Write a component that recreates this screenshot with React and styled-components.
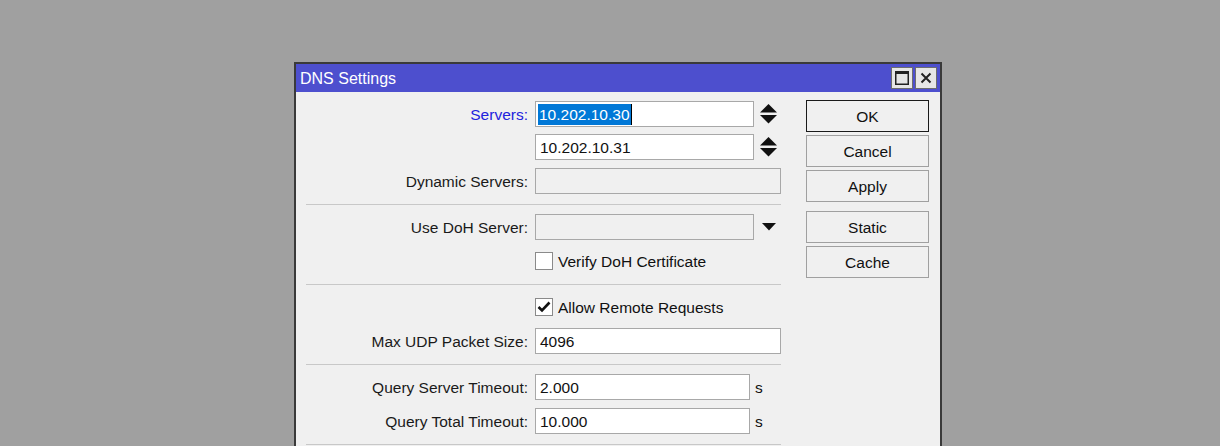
import React from 'react';
import styled, { createGlobalStyle } from 'styled-components';

const GlobalStyle = createGlobalStyle`
  html, body {
    margin: 0;
    padding: 0;
    background: #a0a0a0;
    font-family: "Liberation Sans", Arial, sans-serif;
    overflow: hidden;
  }
`

const Desk = styled.div`
  width: 1220px;
  height: 446px;
  padding: 62px 0 0 294px;
  box-sizing: border-box;
`

const Window = styled.div`
  width: 648px;
  height: 384px;
  box-sizing: border-box;
  border: 2px solid #3a3a3a;
  border-bottom: none;
  background: #f0f0f0;
  overflow: hidden;
`

const TitleBar = styled.div`
  height: 28px;
  background: #4d4fce;
  display: flex;
  align-items: center;
  padding: 0 3px 0 4px;
  color: #fff;
  font-size: 16px;
`

const Title = styled.div`
  flex: 1;
  padding-top: 2px;
`

const TitleButton = styled.div`
  width: 20px;
  height: 20px;
  margin-left: 2px;
  background: #e6e6e6;
  border: 1px solid #6d6d6d;
  display: flex;
  align-items: center;
  justify-content: center;
`

const Body = styled.div`
  display: flex;
  padding: 9px 11px 0 10px;
  gap: 25px;
`

const Form = styled.div`
  width: 475px;
  display: flex;
  flex-direction: column;
`

const Row = styled.div`
  height: 26px;
  flex-shrink: 0;
  display: flex;
  align-items: center;
  margin-top: ${p => p.$top ?? 8}px;
  font-size: 15.5px;
`

const Label = styled.div`
  width: 222px;
  margin-right: 7px;
  padding-top: 2px;
  text-align: right;
  color: ${p => p.$accent ? '#2222dd' : '#1a1a1a'};
  white-space: nowrap;
`

const Field = styled.div`
  width: ${p => p.$w}px;
  height: 26px;
  box-sizing: border-box;
  border: 1px solid #a8a8a8;
  background: ${p => p.$disabled ? '#f0f0f0' : '#fff'};
  color: #111;
  padding: 1px 0 0 4px;
  display: flex;
  align-items: center;
`

const Selected = styled.span`
  background: #0078d7;
  color: #fff;
  line-height: 21px;
  padding: 0 1px 0 1px;
  margin: -1px 0 0 -2px;
  border-right: 1px solid #000;
`

const Side = styled.div`
  width: 17px;
  margin-left: 6px;
  display: flex;
  align-items: center;
  justify-content: center;
`

const Unit = styled.div`
  margin-left: 5px;
  padding-top: 2px;
  color: #111;
`

const Separator = styled.div`
  height: 1px;
  flex-shrink: 0;
  background: #c8c8c8;
  margin: 10px 0 9px;
`

const Check = styled.div`
  width: 18px;
  height: 18px;
  box-sizing: border-box;
  border: 1px solid #8a8a8a;
  background: #fff;
  margin-left: 229px;
  margin-right: 5px;
  display: flex;
  align-items: center;
  justify-content: center;
`

const CheckText = styled.div`
  padding-top: 2px;
  color: #111;
`

const Buttons = styled.div`
  width: 123px;
  display: flex;
  flex-direction: column;
  margin-top: -1px;
`

const Button = styled.div`
  height: 32px;
  flex-shrink: 0;
  box-sizing: border-box;
  border: 1px solid ${p => p.$default ? '#1a1a1a' : '#a0a0a0'};
  background: #f0f0f0;
  display: flex;
  align-items: center;
  justify-content: center;
  padding-top: 2px;
  font-size: 15.5px;
  color: #111;
  margin-top: ${p => p.$top ?? 3}px;
`

const Spinner = () => (
  <svg width="17" height="20" viewBox="0 0 17 20">
    <path d="M8.5 0 L17 8.5 L0 8.5 Z" fill="#111" />
    <path d="M0 11 L17 11 L8.5 19.5 Z" fill="#111" />
  </svg>
)

const DropArrow = () => (
  <svg width="14" height="8" viewBox="0 0 14 8">
    <path d="M0 0 L14 0 L7 7.5 Z" fill="#111" />
  </svg>
)

const Tick = () => (
  <svg width="14" height="12" viewBox="0 0 14 12">
    <path d="M1.5 6 L5 9.5 L12.5 1.5" fill="none" stroke="#111" strokeWidth="2.6" />
  </svg>
)

export default function App() {
  return (
    <>
      <GlobalStyle />
      <Desk>
        <Window>
          <TitleBar>
            <Title>DNS Settings</Title>
            <TitleButton>
              <svg width="14" height="14" viewBox="0 0 14 14">
                <rect x="0.75" y="0.75" width="12.5" height="12.5" fill="none" stroke="#222" strokeWidth="1.5" />
                <rect x="0" y="0" width="14" height="3" fill="#222" />
              </svg>
            </TitleButton>
            <TitleButton>
              <svg width="12" height="12" viewBox="0 0 12 12">
                <path d="M1.5 1.5 L10.5 10.5 M10.5 1.5 L1.5 10.5" stroke="#222" strokeWidth="2" />
              </svg>
            </TitleButton>
          </TitleBar>
          <Body>
            <Form>
              <Row $top={0}>
                <Label $accent>Servers:</Label>
                <Field $w={219}><Selected>10.202.10.30</Selected></Field>
                <Side><Spinner /></Side>
              </Row>
              <Row $top={7}>
                <Label />
                <Field $w={219}>10.202.10.31</Field>
                <Side><Spinner /></Side>
              </Row>
              <Row>
                <Label>Dynamic Servers:</Label>
                <Field $w={246} $disabled />
              </Row>
              <Separator />
              <Row $top={0}>
                <Label>Use DoH Server:</Label>
                <Field $w={219} $disabled />
                <Side><DropArrow /></Side>
              </Row>
              <Row>
                <Check />
                <CheckText>Verify DoH Certificate</CheckText>
              </Row>
              <Separator />
              <Row $top={0}>
                <Check><Tick /></Check>
                <CheckText>Allow Remote Requests</CheckText>
              </Row>
              <Row>
                <Label>Max UDP Packet Size:</Label>
                <Field $w={246}>4096</Field>
              </Row>
              <Separator />
              <Row $top={0}>
                <Label>Query Server Timeout:</Label>
                <Field $w={215}>2.000</Field>
                <Unit>s</Unit>
              </Row>
              <Row>
                <Label>Query Total Timeout:</Label>
                <Field $w={215}>10.000</Field>
                <Unit>s</Unit>
              </Row>
              <Separator />
            </Form>
            <Buttons>
              <Button $default $top={0}>OK</Button>
              <Button>Cancel</Button>
              <Button>Apply</Button>
              <Button $top={9}>Static</Button>
              <Button>Cache</Button>
            </Buttons>
          </Body>
        </Window>
      </Desk>
    </>
  );
}
